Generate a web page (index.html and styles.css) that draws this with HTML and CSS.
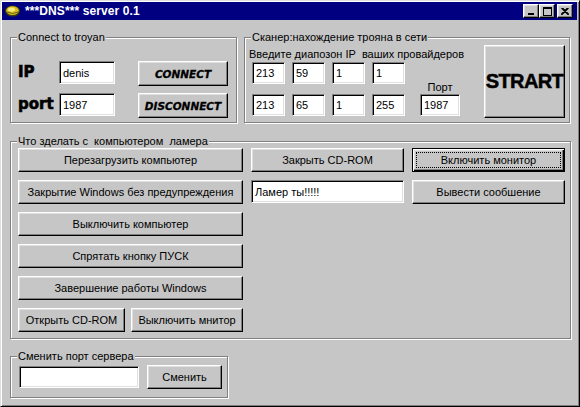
FILE: index.html
```html
<!DOCTYPE html>
<html>
<head>
<meta charset="utf-8">
<link rel="stylesheet" href="styles.css">
</head>
<body>
<div class="window">
  <div class="titlebar">
    <svg class="app-icon" width="17" height="14" viewBox="0 0 17 14">
      <ellipse cx="8.5" cy="7" rx="7.5" ry="5.5" fill="#3a3a10"/>
      <ellipse cx="8.5" cy="6.6" rx="6.3" ry="4.4" fill="#d8c020"/>
      <ellipse cx="7.5" cy="5.6" rx="3.5" ry="2" fill="#f4ec80"/>
      <path d="M3 8 Q8.5 11 14 8" stroke="#6a6010" stroke-width="1" fill="none"/>
    </svg>
    <span class="title">***DNS*** server 0.1</span>
    <div class="controls">
      <div class="ctl">
        <svg width="8" height="7" viewBox="0 0 8 7"><rect x="1" y="5" width="6" height="2" fill="#000"/></svg>
      </div>
      <div class="ctl">
        <svg width="9" height="9" viewBox="0 0 9 9"><rect x="0.5" y="0.5" width="8" height="8" fill="none" stroke="#000"/><rect x="0" y="0" width="9" height="2" fill="#000"/></svg>
      </div>
      <div class="ctl ctl-close">
        <svg width="8" height="7" viewBox="0 0 8 7"><path d="M0.5 0 L7.5 7 M1.5 0 L8 6.5 M7.5 0 L0.5 7 M6.5 0 L0 6.5" stroke="#000" stroke-width="1.2"/></svg>
      </div>
    </div>
  </div>

  <div class="client">
    <div class="top-row">
      <div class="group g-connect">
        <span class="group-title">Connect to troyan</span>
        <div class="connect-grid">
          <span class="big-label">IP</span>
          <div class="field f-conn">denis</div>
          <div class="btn btn-fancy">CONNECT</div>
          <span class="big-label">port</span>
          <div class="field f-conn">1987</div>
          <div class="btn btn-fancy">DISCONNECT</div>
        </div>
      </div>

      <div class="group g-scan">
        <span class="group-title">Сканер:нахождение трояна в сети</span>
        <div class="scan-left">
          <div class="scan-hint">Введите диапозон IP&nbsp; ваших провайдеров</div>
          <div class="ip-grid">
            <div class="field f-ip">213</div>
            <div class="field f-ip">59</div>
            <div class="field f-ip">1</div>
            <div class="field f-ip">1</div>
            <div class="port-col">
              <span class="port-label">Порт</span>
              <div class="field f-port">1987</div>
            </div>
            <div class="field f-ip">213</div>
            <div class="field f-ip">65</div>
            <div class="field f-ip">1</div>
            <div class="field f-ip">255</div>
          </div>
        </div>
        <div class="btn btn-start">STRART</div>
      </div>
    </div>

    <div class="group g-actions">
      <span class="group-title">Что зделать с&nbsp; компьютером&nbsp; ламера</span>
      <div class="actions-grid">
        <div class="btn">Перезагрузить компьютер</div>
        <div class="btn">Закрыть CD-ROM</div>
        <div class="btn btn-default"><span class="focus">Включить монитор</span></div>
        <div class="btn">Закрытие Windows без предупреждения</div>
        <div class="field f-msg">Ламер ты!!!!!</div>
        <div class="btn">Вывести сообшение</div>
        <div class="btn col-left">Выключить компьютер</div>
        <div class="btn col-left">Спрятать кнопку ПУСК</div>
        <div class="btn col-left">Завершение работы Windows</div>
        <div class="split col-left">
          <div class="btn b-open">Открыть CD-ROM</div>
          <div class="btn b-mon">Выключить мнитор</div>
        </div>
      </div>
    </div>

    <div class="group g-port">
      <span class="group-title">Сменить порт сервера</span>
      <div class="port-row">
        <div class="field f-newport"></div>
        <div class="btn b-change">Сменить</div>
      </div>
    </div>
  </div>
</div>
</body>
</html>
```

FILE: styles.css
```css
* { box-sizing: border-box; }
html, body { margin: 0; padding: 0; }
body {
  width: 580px;
  height: 407px;
  overflow: hidden;
  background: #c6c6c6;
  font-family: "Liberation Sans", Arial, sans-serif;
  font-size: 11px;
  color: #000;
}
.window {
  width: 580px;
  height: 407px;
  background: #c6c6c6;
  border: 1px solid;
  border-color: #dfdfdf #000 #000 #dfdfdf;
  box-shadow: inset 1px 1px 0 #fff, inset -1px -1px 0 #808080;
  padding: 1px 2px 2px 1px;
  display: flex;
  flex-direction: column;
}
.titlebar {
  height: 18px;
  background: #000080;
  display: flex;
  align-items: center;
  padding: 0 4px 0 2px;
  flex: none;
}
.app-icon { flex: none; margin-right: 4px; }
.title {
  color: #fff;
  font-weight: bold;
  font-size: 12px;
  letter-spacing: 0.1px;
}
.controls { margin-left: auto; display: flex; gap: 0; }
.ctl {
  width: 16px;
  height: 14px;
  background: #c6c6c6;
  border: 1px solid;
  border-color: #fff #000 #000 #fff;
  box-shadow: inset -1px -1px 0 #808080, inset 1px 1px 0 #dfdfdf;
  display: flex;
  align-items: center;
  justify-content: center;
}
.ctl-close { margin-left: 2px; }

.client {
  flex: 1;
  padding: 17px 0 0 8px;
  display: flex;
  flex-direction: column;
  align-items: flex-start;
}
.top-row { display: flex; gap: 7px; }

.group {
  position: relative;
  border: 1px solid #808080;
  box-shadow: inset 1px 1px 0 #fff, 1px 1px 0 #fff;
}
.group-title {
  position: absolute;
  top: -7px;
  left: 6px;
  padding: 0 1px;
  line-height: 13px;
  background: #c6c6c6;
  white-space: nowrap;
}

/* fields & buttons */
.field {
  background: #fff;
  border: 1px solid;
  border-color: #808080 #fff #fff #808080;
  box-shadow: inset 1px 1px 0 #000, inset -1px -1px 0 #dfdfdf;
  padding: 0 3px;
  display: flex;
  align-items: center;
  white-space: nowrap;
  overflow: hidden;
}
.btn {
  background: #c6c6c6;
  border: 1px solid;
  border-color: #fff #000 #000 #fff;
  box-shadow: inset -1px -1px 0 #808080, inset 1px 1px 0 #dfdfdf;
  display: flex;
  align-items: center;
  justify-content: center;
  white-space: nowrap;
}

/* connect group */
.g-connect { width: 227px; height: 86px; padding: 23px 0 0 7px; }
.connect-grid {
  display: grid;
  grid-template-columns: 41px 79px 90px;
  grid-template-rows: 25px 25px;
  row-gap: 7px;
  align-items: start;
}
.big-label {
  font-family: "DejaVu Sans", sans-serif;
  font-weight: bold;
  font-size: 15px;
  line-height: 23px;
  -webkit-text-stroke: 0.6px #000;
}
.f-conn { width: 56px; height: 23px; }
.btn-fancy {
  height: 25px;
  font-family: "DejaVu Sans", sans-serif;
  font-weight: bold;
  font-style: italic;
  font-size: 10.5px;
  -webkit-text-stroke: 0.3px #000;
}

/* scan group */
.g-scan {
  width: 326px;
  height: 86px;
  display: flex;
  align-items: flex-start;
}
.scan-left { flex: 1; padding: 10px 0 0 4px; }
.scan-hint { line-height: 13px; white-space: nowrap; }
.ip-grid {
  margin: 1px 0 0 3px;
  display: grid;
  grid-template-columns: 33px 33px 33px 33px 48px;
  grid-template-rows: 22px 22px;
  column-gap: 7px;
  row-gap: 10px;
}
.f-ip { height: 22px; }
.port-col {
  grid-column: 5;
  grid-row: 1 / 3;
  display: flex;
  flex-direction: column;
  justify-content: flex-end;
  align-items: flex-end;
}
.port-label { width: 40px; text-align: center; line-height: 12px; margin-bottom: 1px; }
.f-port { width: 40px; height: 22px; }
.btn-start {
  flex: none;
  width: 81px;
  height: 73px;
  margin: 7px 4px 0 0;
  font-family: "Liberation Sans", Arial, sans-serif;
  font-weight: bold;
  font-size: 20px;
  letter-spacing: -0.6px;
  -webkit-text-stroke: 0.5px #000;
}

/* actions group */
.g-actions {
  margin-top: 18px;
  width: 561px;
  height: 198px;
  padding: 6px 0 0 7px;
}
.actions-grid {
  display: grid;
  grid-template-columns: 225px 153px 153px;
  grid-auto-rows: 24px;
  column-gap: 8px;
  row-gap: 8px;
}
.col-left { grid-column: 1; }
.f-msg { height: 23px; }
.btn-default {
  border-color: #000;
  box-shadow: inset 1px 1px 0 #fff, inset -1px -1px 0 #000, inset -2px -2px 0 #808080, inset 2px 2px 0 #dfdfdf;
  padding: 3px;
}
.focus {
  flex: 1;
  align-self: stretch;
  border: 1px dotted #000;
  display: flex;
  align-items: center;
  justify-content: center;
}
.split { display: flex; gap: 6px; }
.b-open { width: 107px; }
.b-mon { flex: 1; }

/* port group */
.g-port {
  margin-top: 17px;
  width: 218px;
  height: 42px;
  padding: 8px 0 0 8px;
}
.port-row { display: flex; align-items: center; gap: 8px; }
.f-newport { width: 120px; height: 22px; }
.b-change { width: 75px; height: 24px; }
```
